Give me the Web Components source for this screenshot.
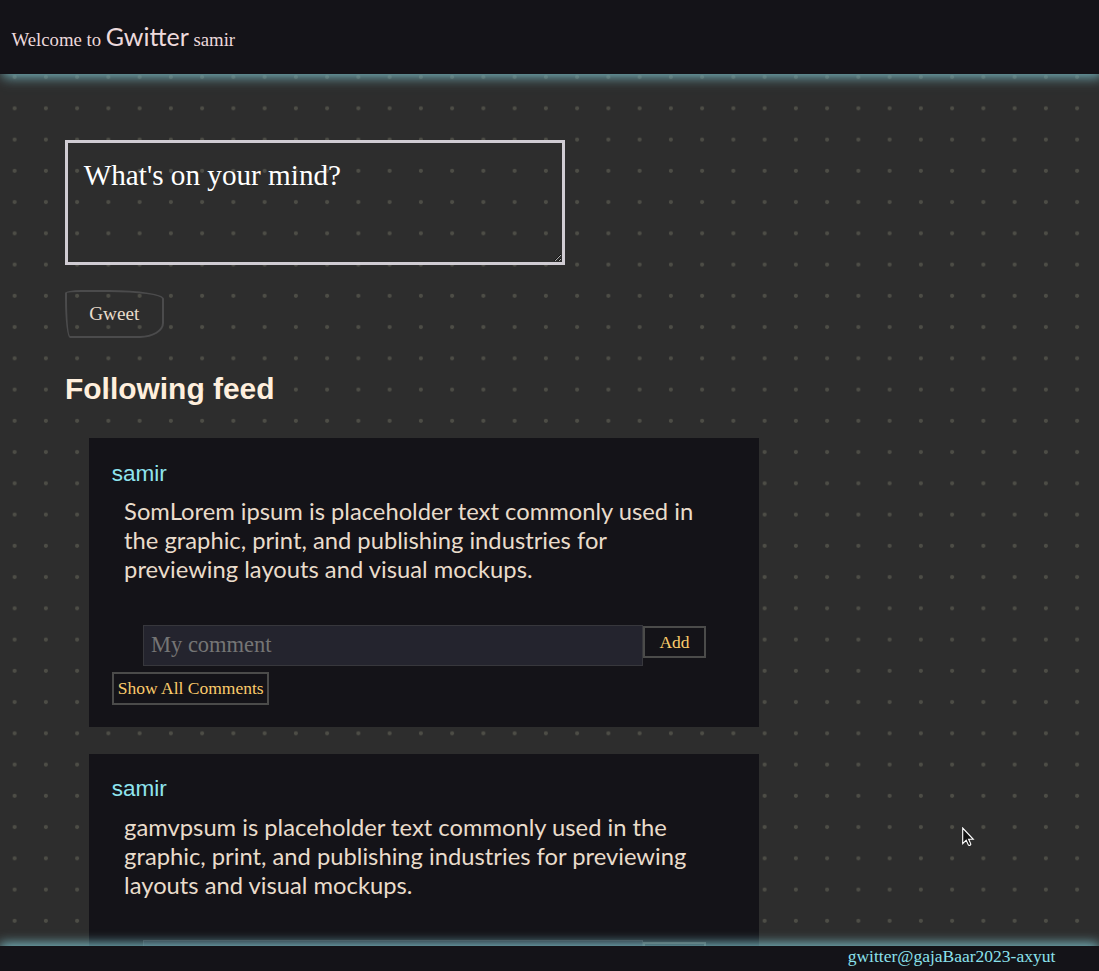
<!DOCTYPE html>
<html lang="en">
<head>
<meta charset="utf-8">
<title>Gwitter</title>
<style>
html, body { margin: 0; height: 100%; }
body {
  overflow: hidden;
  background-color: #2d2d2d;
  font-family: "Liberation Serif", "Times New Roman", serif;
}
</style>
</head>
<body>
<gwitter-app></gwitter-app>
<script>
const define = (name, html) => {
  const template = document.createElement('template');
  template.innerHTML = html;
  customElements.define(name, class extends HTMLElement {
    constructor() {
      super();
      this.attachShadow({ mode: 'open' }).append(template.content.cloneNode(true));
    }
  });
};

define('gw-header', `
<style>
:host { display: flex; box-sizing: border-box; height: 74px; padding: 21px 11.5px 0; position: relative; z-index: 2;
  background: #141318; color: #ecd9dc; font-size: 18.75px; box-shadow: 3px 3px 12px #76b4bd; }
p { margin: 0; line-height: 31px; white-space: pre; }
b { font: 400 25px/31px Lato, sans-serif; }
</style>
<p>Welcome to <b>Gwitter</b> <slot></slot></p>`);

define('gw-composer', `
<style>
:host { display: flex; flex-direction: column; align-items: flex-start; gap: 25.2px; }
textarea { display: block; box-sizing: border-box; width: 500px; height: 125px; margin: 0; padding: 15px 15.7px; border: 3px solid #d0ccd3;
  border-radius: 0; outline: 0; background: transparent; color: #fff; font: 29.2px/34px "Liberation Serif", serif; overflow: hidden; }
textarea::placeholder { color: #fff; opacity: 1; }
button { box-sizing: border-box; width: 98.6px; height: 47.5px; padding: 0; border: 2px solid #4b4b4c; background: transparent; color: #e9dccb;
  border-radius: 16px 55px 24px 5px / 3px 9px 15px 40px; font: 19.2px/24px "Liberation Serif", serif; }
</style>
<textarea placeholder="What's on your mind?"></textarea>
<button>Gweet</button>`);

define('gw-post', `
<style>
:host { display: block; box-sizing: border-box; width: 670px; height: 289px; padding: 22.5px 23px; background: #141318; }
.name { height: 26px; margin-left: -.3px; color: #8fe4ee; font: 22.5px/26px "Liberation Sans", sans-serif; }
.text { margin: 10.5px 0 0 12.1px; width: 590px; height: 87px; color: #e9dccb; font: 23.75px/29px Lato, sans-serif; }
.comment { display: flex; align-items: flex-start; margin: 40.5px 0 0 31px; height: 47.5px; }
input { box-sizing: border-box; width: 500px; height: 41px; margin: 0; padding: 0 7px; border: 1px solid #37373c; border-radius: 0; outline: 0;
  background: #24242e; color: #e9dccb; font: 22.5px "Liberation Serif", serif; }
input::placeholder { color: #757575; opacity: 1; }
button { box-sizing: border-box; border: 2px solid #4b4b4a; padding: 0; background: transparent; color: #fbcb6b; font: 17.5px/20px "Liberation Serif", serif; }
.add { width: 63px; height: 32px; margin: 1.3px 0 0; }
.show { display: block; width: 157px; height: 33px; padding: 0 0 1px .4px; white-space: nowrap; }
</style>
<div class="name"><slot name="author"></slot></div>
<div class="text"><slot></slot></div>
<div class="comment"><input placeholder="My comment"><button class="add">Add</button></div>
<button class="show">Show All Comments</button>`);

define('gw-feed', `
<style>
:host { display: block; }
h2 { margin: 0; height: 36px; color: #ffefdd; font: 700 29.95px/36px "Liberation Sans", sans-serif; }
.list { display: flex; flex-direction: column; gap: 26.6px; margin: 31.5px 0 0 24px; }
</style>
<h2>Following feed</h2>
<div class="list"><slot></slot></div>`);

define('gw-footer', `
<style>
:host { display: flex; justify-content: flex-end; box-sizing: border-box; height: 25px; padding-right: 43.7px; position: relative; z-index: 2;
  background: #141318; color: #8be1ec; font-size: 17.5px; line-height: 21px; box-shadow: 0 -3px 12px #76b4bd; }
</style>
<span><slot></slot></span>`);

define('gw-pointer', `
<style>
:host { position: absolute; left: 962px; top: 827px; z-index: 3; pointer-events: none; }
svg { display: block; }
</style>
<svg width="13" height="21" viewBox="0 0 13 21"><path d="M.7 1v15.6l3.5-3.4 2.2 4.7c.5 1 2.9.1 2.3-1.1l-2.1-4.5h4.7z" fill="#111" stroke="#fff" stroke-width="1.1"/></svg>`);

define('gwitter-app', `
<style>
:host { display: grid; grid-template-rows: 74px minmax(0, 1fr) 25px; height: 971px; overflow: hidden; position: relative;
  background: radial-gradient(circle at 14.6px 14.5px, #4d4d46 1.6px, transparent 2.4px) 0 0 / 31.25px 31.25px; }
main { overflow: hidden; padding: 66px 65px 0; }
gw-feed { margin-top: 33px; }
</style>
<gw-header>samir</gw-header>
<main>
  <gw-composer></gw-composer>
  <gw-feed>
    <gw-post><span slot="author">samir</span>SomLorem ipsum is placeholder text commonly used in the graphic, print, and publishing industries for previewing layouts and visual mockups.</gw-post>
    <gw-post><span slot="author">samir</span>gamvpsum is placeholder text commonly used in the graphic, print, and publishing industries for previewing layouts and visual mockups.</gw-post>
  </gw-feed>
</main>
<gw-footer>gwitter@gajaBaar2023-axyut</gw-footer>
<gw-pointer></gw-pointer>`);
</script>
</body>
</html>
